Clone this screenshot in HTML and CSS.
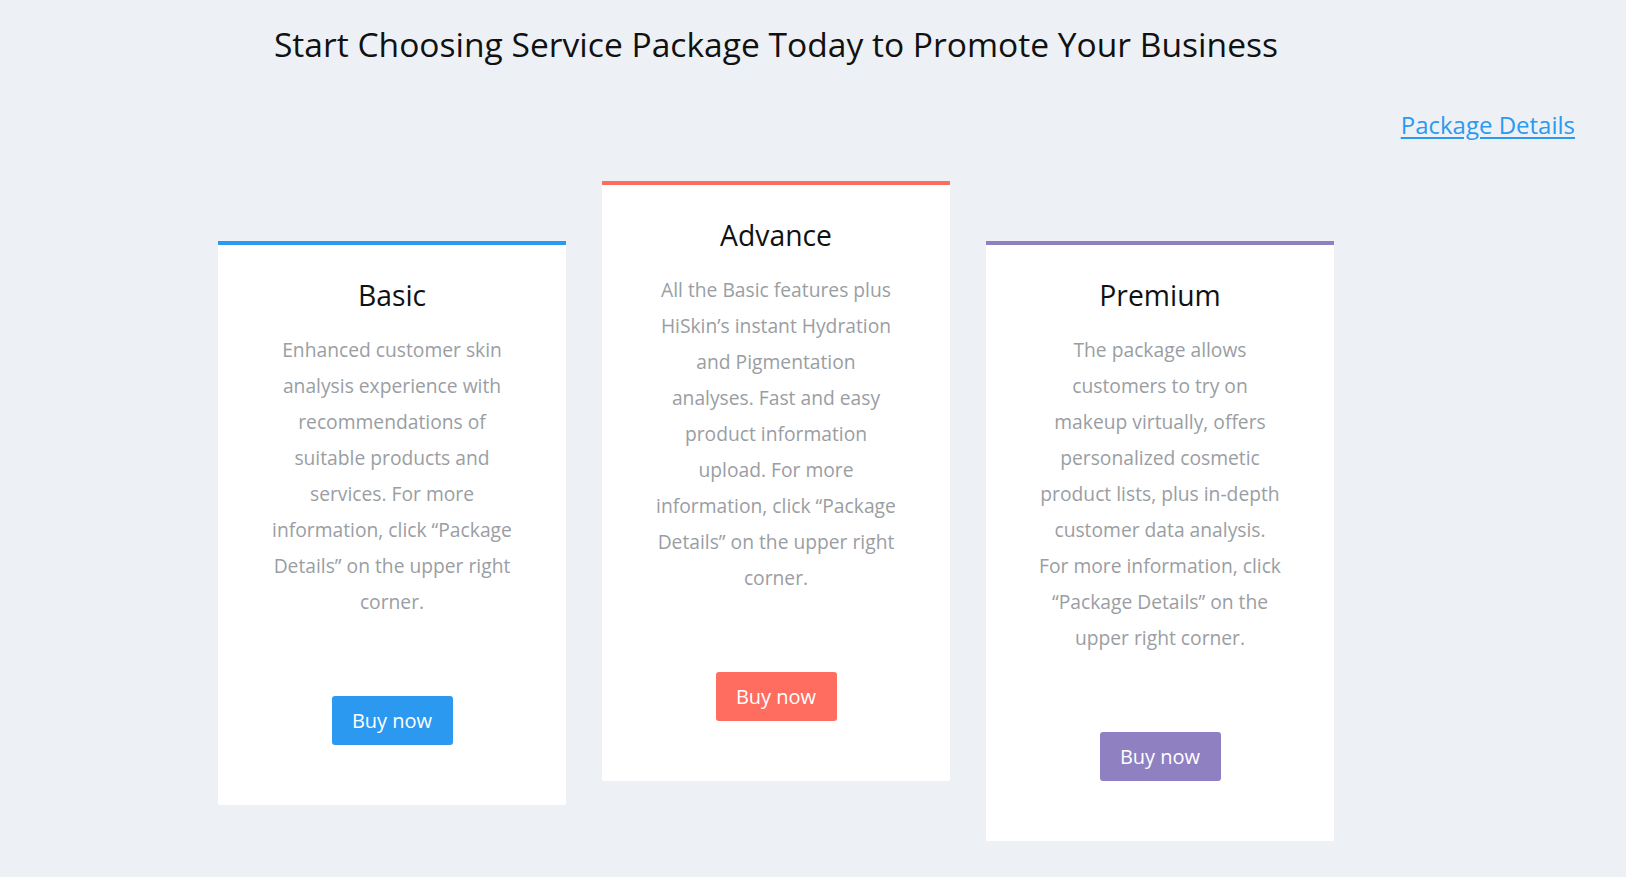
FILE: index.html
```html
<!DOCTYPE html>
<html lang="en">
<head>
<meta charset="utf-8">
<title>Service Packages</title>
<link rel="stylesheet" href="styles.css">
</head>
<body>
<main class="page">
  <h1 class="title">Start Choosing Service Package Today to Promote Your Business</h1>
  <div class="link-row"><a class="details-link" href="#">Package Details</a></div>
  <section class="cards">
    <article class="card card-basic">
      <h2 class="card-title">Basic</h2>
      <p class="card-text">Enhanced customer skin<br>analysis experience with<br>recommendations of<br>suitable products and<br>services. For more<br>information, click “Package<br>Details” on the upper right<br>corner.</p>
      <button class="buy buy-basic">Buy now</button>
    </article>
    <article class="card card-advance">
      <h2 class="card-title">Advance</h2>
      <p class="card-text">All the Basic features plus<br>HiSkin’s instant Hydration<br>and Pigmentation<br>analyses. Fast and easy<br>product information<br>upload. For more<br>information, click “Package<br>Details” on the upper right<br>corner.</p>
      <button class="buy buy-advance">Buy now</button>
    </article>
    <article class="card card-premium">
      <h2 class="card-title">Premium</h2>
      <p class="card-text">The package allows<br>customers to try on<br>makeup virtually, offers<br>personalized cosmetic<br>product lists, plus in-depth<br>customer data analysis.<br>For more information, click<br>“Package Details” on the<br>upper right corner.</p>
      <button class="buy buy-premium">Buy now</button>
    </article>
  </section>
</main>
</body>
</html>
```

FILE: styles.css
```css
html, body {
  margin: 0;
  padding: 0;
}

body {
  background: #edf1f5;
  font-family: "Open Sans", "Noto Sans", sans-serif;
  color: #111;
}

.page {
  display: flex;
  flex-direction: column;
  padding-top: 20px;
}

.title {
  margin: 0 74px 0 0;
  font-size: 33.6px;
  line-height: 48px;
  font-weight: 400;
  text-align: center;
  color: #111;
}

.link-row {
  display: flex;
  justify-content: flex-end;
  padding: 39px 51px 0 0;
}

.details-link {
  font-size: 24px;
  line-height: 36px;
  color: #2b99f0;
  text-decoration: underline;
  text-underline-offset: 3px;
}

.cards {
  display: flex;
  justify-content: center;
  align-items: flex-start;
  gap: 36px;
  margin: 38px 74px 0 0;
}

.card {
  width: 348px;
  box-sizing: border-box;
  background: #fff;
  border-top: 4px solid #2b99f0;
  padding: 29px 20px 60px;
  display: flex;
  flex-direction: column;
  align-items: center;
  text-align: center;
}

.card-basic,
.card-premium {
  margin-top: 60px;
}

.card-advance {
  border-top-color: #fe6d5f;
}

.card-premium {
  border-top-color: #8f80c2;
}

.card-title {
  margin: 0 0 16px;
  font-size: 28.3px;
  line-height: 42px;
  font-weight: 400;
  color: #111;
}

.card-text {
  margin: 0;
  font-size: 19.25px;
  line-height: 36px;
  color: #9a9ea3;
}

.buy {
  margin-top: 76px;
  border: 0;
  border-radius: 3px;
  padding: 0 20px;
  height: 49px;
  min-width: 121px;
  font-family: inherit;
  font-size: 20px;
  color: #fff;
  background: #2b99f0;
  cursor: pointer;
}

.buy-advance {
  background: #fe6d5f;
}

.buy-premium {
  background: #8f80c2;
}
```
